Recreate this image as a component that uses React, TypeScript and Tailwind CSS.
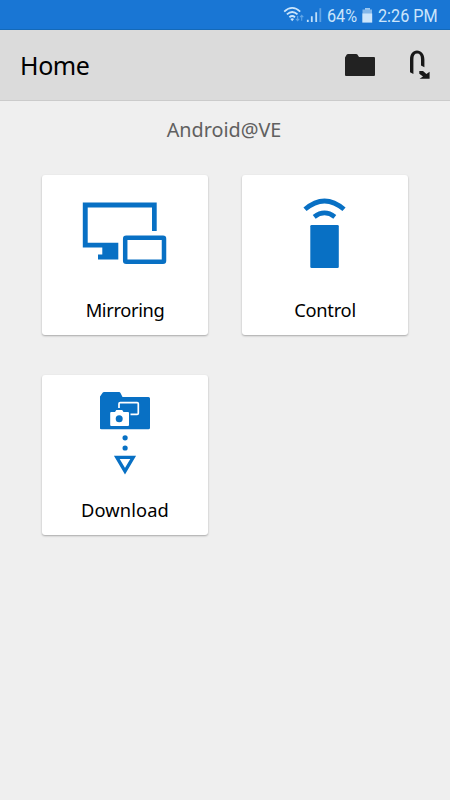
import React from "react";

const BLUE = "#0870c4";

function StatusBar() {
  return (
    <div className="flex h-[30px] items-center bg-[#1976d4] border-b border-[#1469b8] pl-[283px] font-['Roboto',sans-serif] text-[18px] leading-none text-[#cbe5fb]">
      <svg className="h-[30px] w-[44px] shrink-0" viewBox="0 0 44 30" fill="none">
        <path d="M1.2 11.6Q9.2 4.2 17.2 11.6M3.9 14.4Q9.2 9.6 14.5 14.4M6.4 17.2Q9.2 14.8 12 17.2" stroke="#cbe5fb" strokeWidth="1.8" />
        <path d="M7.4 19Q9.2 17.6 11 19L9.2 21.2Z" fill="#cbe5fb" />
        <path d="M14.6 16V20.5M13 18.8L14.6 20.7L16.2 18.8M18.7 20.7V15.5M17.1 17.2L18.7 15.3L20.3 17.2" stroke="#5fa5e7" strokeWidth="1.1" />
        <path d="M24.8 19.8V22M28.8 16.2V22M33.2 12.2V22" stroke="#c1dff8" strokeWidth="1.8" />
        <path d="M37.3 8.2V22" stroke="#5fa2e3" strokeWidth="1.8" />
      </svg>
      <span className="w-[35px] shrink-0 origin-left scale-x-[.9] whitespace-nowrap pt-[2px]">64%</span>
      <svg className="h-[30px] w-[16px] shrink-0" viewBox="0 0 16 30">
        <path d="M3 8H8V10H3Z" fill="#9cc8f0" />
        <path d="M.5 9.5H10V14H.5Z" fill="#82b7ea" />
        <path d="M.3 13.5H10.2V22.6H.3Z" fill="#cbe5fb" />
      </svg>
      <span className="w-[67px] shrink-0 origin-left scale-x-[.9] whitespace-nowrap pt-[2px]">2:26 PM</span>
    </div>
  );
}

function Header() {
  return (
    <header className="flex h-[71px] items-center border-b border-[#cbcbcb] bg-[#dbdbdb]">
      <h1 className="w-[345px] pl-[20px] text-[25px] leading-[34px] tracking-[-0.4px] text-black">Home</h1>
      <svg className="h-[24px] w-[30px]" viewBox="0 0 30 24">
        <path d="M0 22V4.5L1.8 1.5Q2.2 1 3 1H11.2Q12 1 12.4 1.6L14 4H29Q30 4 30 5V22Q30 23 29 23H1Q0 23 0 22Z" fill="#222" />
      </svg>
      <svg className="ml-[34px] h-[32px] w-[24px]" viewBox="0 0 24 32" fill="none">
        <path d="M1 23.2V10.5C1 5 3.8 1.5 8 1.5S15.4 5 15.4 10.5V18.2L12 16.6V10.5C12 6.6 10.8 4.6 8.2 4.6S4.4 6.6 4.4 10.5V24.9Z" fill="#181818" />
        <path d="M10.3 22H14L17.4 24.9L20.6 22.8V29.7H10.6L14 27.5L10.3 24.8Z" fill="#181818" />
      </svg>
    </header>
  );
}

function MirroringIcon() {
  return (
    <svg className="h-[128px] w-[165px]" viewBox="0 0 165 128">
      <path d="M40.8 27.4H114.7V56H110V32.4H45.7V67.8H76.3V84.5H56V79.5H60.3V72.5H40.8Z" fill={BLUE} />
      <rect x="83.2" y="62.7" width="38.8" height="24.1" rx="1" fill="none" stroke={BLUE} strokeWidth="4.5" />
    </svg>
  );
}

function ControlIcon() {
  return (
    <svg className="h-[128px] w-[165px]" viewBox="0 0 165 128" fill="none">
      <path d="M63 34.3Q82.5 17.5 102 34.3M72.2 41.8Q82.5 34 92.8 41.8" stroke={BLUE} strokeWidth="4.8" />
      <rect x="68.3" y="50" width="28.5" height="43" rx="1.3" fill={BLUE} />
    </svg>
  );
}

function DownloadIcon() {
  return (
    <svg className="h-[128px] w-[165px]" viewBox="0 0 165 128" fill="none">
      <path d="M58 53.5V21.5L60.8 17.5Q61.2 17 62 17H77Q78 17 78.5 18L80.5 22H106.5Q108 22 108 23.5V52.7Q108 54.2 106.5 54.2H59.5Q58 54.2 58 53.5Z" fill={BLUE} />
      <path d="M77 33V28.8Q77 27.7 78.2 27.7H95.2Q96.3 27.7 96.3 28.8V38.2Q96.3 39.3 95.2 39.3H88.5" stroke="white" strokeWidth="1.7" />
      <path d="M68.2 38Q68.2 37 69.2 37H73L74.3 35H80.2L81.5 37H86Q87 37 87 38V50Q87 51 86 51H69.2Q68.2 51 68.2 50Z" fill="white" />
      <circle cx="77.2" cy="43.8" r="3.5" fill={BLUE} />
      <circle cx="83.1" cy="62.8" r="2.6" fill={BLUE} />
      <circle cx="83.1" cy="73" r="2.6" fill={BLUE} />
      <path d="M74.8 82.3H91.2L83 96.2Z" stroke={BLUE} strokeWidth="3.3" />
    </svg>
  );
}

function Card({ label, tracking, children }: { label: string; tracking: string; children: React.ReactNode }) {
  return (
    <button className="flex h-[160px] w-[166px] flex-col items-start rounded-[3px] bg-white text-[18.3px] leading-[20px] text-black shadow-[0_1px_2px_rgba(0,0,0,0.3)]">
      <span className="h-[125px]">{children}</span>
      <span className={`w-full text-center ${tracking}`}>{label}</span>
    </button>
  );
}

export default function App() {
  return (
    <div className="h-[800px] w-[450px] overflow-hidden bg-[#efefef] font-['Noto_Sans',sans-serif]">
      <StatusBar />
      <Header />
      <main>
        <p className="pt-[15px] pr-[2px] text-center text-[19.8px] leading-[28px] text-[#606060]">Android@VE</p>
        <div className="grid grid-cols-[166px_166px] gap-x-[34px] gap-y-[40px] pt-[31px] pl-[42px]">
          <Card label="Mirroring" tracking="tracking-[-0.35px]"><MirroringIcon /></Card>
          <Card label="Control" tracking="tracking-[-0.25px]"><ControlIcon /></Card>
          <Card label="Download" tracking="tracking-[0.1px]"><DownloadIcon /></Card>
        </div>
      </main>
    </div>
  );
}
